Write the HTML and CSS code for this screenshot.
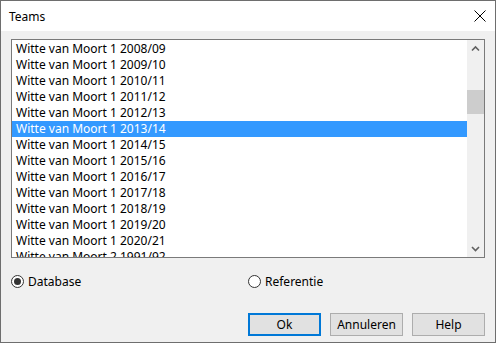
FILE: index.html
```html
<!DOCTYPE html>
<html lang="nl">

<head>
    <meta charset="UTF-8">
    <title>Teams</title>
    <link rel="stylesheet" href="styles.css">
</head>

<body>
    <div class="window">
        <div class="titlebar">
            <span class="title">Teams</span>
            <svg class="close" width="12" height="12" viewBox="0 0 12 12">
                <path d="M0.5 0.5 L11.5 11.5 M11.5 0.5 L0.5 11.5" stroke="#000" stroke-width="1" fill="none" />
            </svg>
        </div>
        <div class="content">
            <div class="listbox">
                <ul class="items">
                    <li>Witte van Moort 1 2008/09</li>
                    <li>Witte van Moort 1 2009/10</li>
                    <li>Witte van Moort 1 2010/11</li>
                    <li>Witte van Moort 1 2011/12</li>
                    <li>Witte van Moort 1 2012/13</li>
                    <li class="selected">Witte van Moort 1 2013/14</li>
                    <li>Witte van Moort 1 2014/15</li>
                    <li>Witte van Moort 1 2015/16</li>
                    <li>Witte van Moort 1 2016/17</li>
                    <li>Witte van Moort 1 2017/18</li>
                    <li>Witte van Moort 1 2018/19</li>
                    <li>Witte van Moort 1 2019/20</li>
                    <li>Witte van Moort 1 2020/21</li>
                    <li>Witte van Moort 2 1991/92</li>
                </ul>
                <div class="scrollbar">
                    <svg class="arrow" width="17" height="17" viewBox="0 0 17 17">
                        <path d="M5 10.5 L8.5 7 L12 10.5" stroke="#606060" stroke-width="1.6" fill="none" />
                    </svg>
                    <div class="track">
                        <div class="thumb"></div>
                    </div>
                    <svg class="arrow" width="17" height="17" viewBox="0 0 17 17">
                        <path d="M5 7 L8.5 10.5 L12 7" stroke="#606060" stroke-width="1.6" fill="none" />
                    </svg>
                </div>
            </div>

            <div class="options">
                <label class="radio"><span class="dot checked"></span>Database</label>
                <label class="radio"><span class="dot"></span>Referentie</label>
            </div>

            <div class="buttons">
                <button class="btn default">Ok</button>
                <button class="btn">Annuleren</button>
                <button class="btn">Help</button>
            </div>
        </div>
    </div>
</body>

</html>
```

FILE: styles.css
```css
* {
    margin: 0;
    padding: 0;
    box-sizing: border-box;
    font-family: 'Noto Sans', 'Open Sans', sans-serif;
}

body {
    background-color: #f0f0f0;
}

.window {
    width: 496px;
    height: 343px;
    border: 1px solid #6e6e6e;
    background-color: #f0f0f0;
    display: flex;
    flex-direction: column;
}

.titlebar {
    height: 30px;
    background-color: #ffffff;
    display: flex;
    align-items: center;
    justify-content: space-between;
    padding: 0 8px 0 8px;
}

.title {
    font-size: 12px;
    color: #000;
}

.close {
    margin-right: 1px;
}

.content {
    padding: 8px 10px 0 10px;
    display: flex;
    flex-direction: column;
}

.listbox {
    height: 219px;
    border: 1px solid #7a7a7a;
    background-color: #ffffff;
    display: flex;
    overflow: hidden;
}

.items {
    flex: 1;
    list-style: none;
    padding-top: 1px;
}

.items li {
    height: 16px;
    line-height: 16px;
    font-size: 12px;
    color: #000;
    padding-left: 4px;
    white-space: nowrap;
}

.items li.selected {
    background-color: #3399ff;
    color: #fff;
}

.scrollbar {
    width: 17px;
    background-color: #f0f0f0;
    display: flex;
    flex-direction: column;
}

.arrow {
    display: block;
    flex-shrink: 0;
}

.track {
    flex: 1;
    padding-top: 33px;
}

.thumb {
    height: 24px;
    background-color: #cdcdcd;
}

.options {
    display: grid;
    grid-template-columns: 1fr 1fr;
    margin-top: 15px;
    height: 16px;
}

.radio {
    display: flex;
    align-items: center;
    font-size: 12px;
    color: #000;
}

.dot {
    width: 13px;
    height: 13px;
    border: 1px solid #333;
    border-radius: 50%;
    background-color: #fff;
    margin-right: 4px;
    display: flex;
    align-items: center;
    justify-content: center;
}

.dot.checked::after {
    content: '';
    width: 7px;
    height: 7px;
    border-radius: 50%;
    background-color: #333;
}

.buttons {
    display: flex;
    justify-content: flex-end;
    gap: 9px;
    margin-top: 24px;
}

.btn {
    width: 73px;
    height: 23px;
    background-color: #e1e1e1;
    border: 1px solid #adadad;
    font-size: 12px;
    color: #000;
}

.btn.default {
    border: 2px solid #0078d7;
}
```
